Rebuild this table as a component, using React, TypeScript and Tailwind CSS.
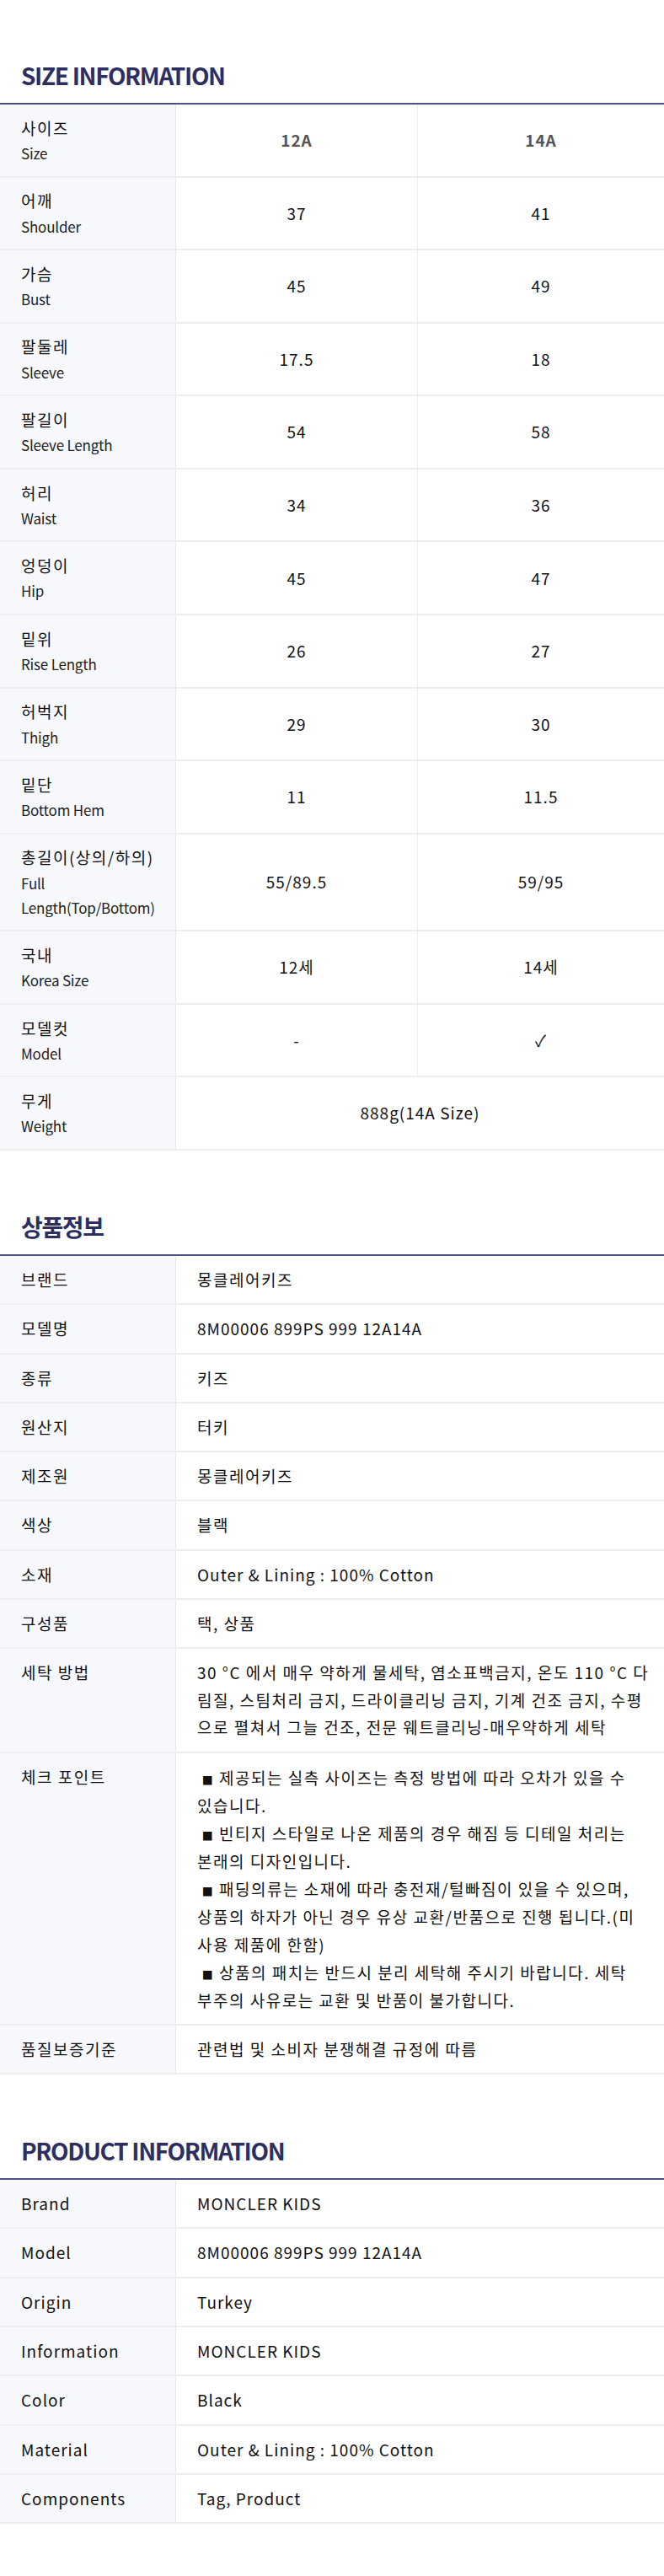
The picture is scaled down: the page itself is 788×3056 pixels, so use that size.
import React from 'react';

type SizeRow = { ko: string; en: string; a: string; b: string };

const sizeRows: SizeRow[] = [
  { ko: '어깨', en: 'Shoulder', a: '37', b: '41' },
  { ko: '가슴', en: 'Bust', a: '45', b: '49' },
  { ko: '팔둘레', en: 'Sleeve', a: '17.5', b: '18' },
  { ko: '팔길이', en: 'Sleeve Length', a: '54', b: '58' },
  { ko: '허리', en: 'Waist', a: '34', b: '36' },
  { ko: '엉덩이', en: 'Hip', a: '45', b: '47' },
  { ko: '밑위', en: 'Rise Length', a: '26', b: '27' },
  { ko: '허벅지', en: 'Thigh', a: '29', b: '30' },
  { ko: '밑단', en: 'Bottom Hem', a: '11', b: '11.5' },
  { ko: '총길이(상의/하의)', en: 'Full Length(Top/Bottom)', a: '55/89.5', b: '59/95' },
  { ko: '국내', en: 'Korea Size', a: '12세', b: '14세' },
  { ko: '모델컷', en: 'Model', a: '-', b: '✓' },
];

const hasHangul = (s: string) => /[가-힣]/.test(s);

// lines broken where the original wraps
const washLines = [
  '30 °C 에서 매우 약하게 물세탁, 염소표백금지, 온도 110 °C 다',
  '림질, 스팀처리 금지, 드라이클리닝 금지, 기계 건조 금지, 수평',
  '으로 펼쳐서 그늘 건조, 전문 웨트클리닝-매우약하게 세탁',
];

const checkLines: [boolean, string][] = [
  [true, '제공되는 실측 사이즈는 측정 방법에 따라 오차가 있을 수'],
  [false, '있습니다.'],
  [true, '빈티지 스타일로 나온 제품의 경우 해짐 등 디테일 처리는'],
  [false, '본래의 디자인입니다.'],
  [true, '패딩의류는 소재에 따라 충전재/털빠짐이 있을 수 있으며,'],
  [false, '상품의 하자가 아닌 경우 유상 교환/반품으로 진행 됩니다.(미'],
  [false, '사용 제품에 한함)'],
  [true, '상품의 패치는 반드시 분리 세탁해 주시기 바랍니다. 세탁'],
  [false, '부주의 사유로는 교환 및 반품이 불가합니다.'],
];

const productKo: [string, string][] = [
  ['브랜드', '몽클레어키즈'],
  ['모델명', '8M00006 899PS 999 12A14A'],
  ['종류', '키즈'],
  ['원산지', '터키'],
  ['제조원', '몽클레어키즈'],
  ['색상', '블랙'],
  ['소재', 'Outer & Lining : 100% Cotton'],
  ['구성품', '택, 상품'],
];

const productEn: [string, string][] = [
  ['Brand', 'MONCLER KIDS'],
  ['Model', '8M00006 899PS 999 12A14A'],
  ['Origin', 'Turkey'],
  ['Information', 'MONCLER KIDS'],
  ['Color', 'Black'],
  ['Material', 'Outer & Lining : 100% Cotton'],
  ['Components', 'Tag, Product'],
];

function SectionTitle({ children }: { children: React.ReactNode }) {
  return (
    <h2 className="px-[25px] mb-[13px] text-[28px] leading-[40px] font-bold tracking-[-1.35px] text-[#2d2f62]">
      {children}
    </h2>
  );
}

function LabelCell({ ko, en }: { ko: string; en: string }) {
  return (
    <div className="bg-[#f7f8fc] border-r border-[#e6e7ec] pl-[25px] pr-[18px] py-[11.7px]">
      <p className="text-[19px] leading-[32.3px] tracking-[1.5px] text-[#111]">{ko}</p>
      <p className="text-[17px] leading-[28.9px] tracking-[-0.2px] text-[#222]">{en}</p>
    </div>
  );
}

function SizeTable() {
  return (
    <div className="border-t-2 border-[#4e5180]">
      <div className="grid grid-cols-[209px_287px_1fr] border-b-2 border-[#eeeeee]">
        <LabelCell ko="사이즈" en="Size" />
        <div className="flex items-center justify-center border-r border-[#eeeeee] text-[19px] font-semibold tracking-[1px] text-[#555]">
          12A
        </div>
        <div className="flex items-center justify-center text-[19px] font-semibold tracking-[1px] text-[#555]">
          14A
        </div>
      </div>
      {sizeRows.map((r) => (
        <div key={r.ko} className="grid grid-cols-[209px_287px_1fr] border-b-2 border-[#eeeeee]">
          <LabelCell ko={r.ko} en={r.en} />
          <div className="flex items-center justify-center border-r border-[#eeeeee] text-[19px] tracking-[1px] text-[#111]">
            {r.a}
          </div>
          <div className="flex items-center justify-center text-[19px] tracking-[1px] text-[#111]">{r.b}</div>
        </div>
      ))}
      <div className="grid grid-cols-[209px_1fr] border-b-2 border-[#eeeeee]">
        <LabelCell ko="무게" en="Weight" />
        <div className="flex items-center justify-center text-[19px] tracking-[1px] text-[#111]">888g(14A Size)</div>
      </div>
    </div>
  );
}

function InfoRow({ label, children, value }: { label: string; children?: React.ReactNode; value?: string }) {
  const labelTrack = hasHangul(label) ? 'tracking-[1.5px]' : 'tracking-[1px]';
  const valueTrack = value && !hasHangul(value) ? 'tracking-[1px]' : 'tracking-[1.5px]';
  return (
    <div className="grid grid-cols-[209px_1fr] border-b-2 border-[#eeeeee] text-[19px] text-[#111]">
      <div className={`bg-[#f7f8fc] border-r border-[#e6e7ec] px-[25px] py-[12px] leading-[32.3px] ${labelTrack}`}>
        {label}
      </div>
      <div className={`pl-[25px] pr-[16px] py-[12px] leading-[32.3px] ${valueTrack}`}>{children ?? value}</div>
    </div>
  );
}

export default function App() {
  return (
    <div className="min-h-screen bg-white font-['Noto_Sans_CJK_KR',sans-serif] pt-[69px] pb-[67px]">
      <section>
        <SectionTitle>SIZE INFORMATION</SectionTitle>
        <SizeTable />
      </section>

      <section className="mt-[70px]">
        <SectionTitle>상품정보</SectionTitle>
        <div className="border-t-2 border-[#4e5180]">
          {productKo.map(([k, v]) => (
            <InfoRow key={k} label={k} value={v} />
          ))}
          <InfoRow label="세탁 방법">
            <div className="leading-[32.5px]">
              {washLines.map((l) => (
                <span key={l} className="block whitespace-nowrap">
                  {l}
                </span>
              ))}
            </div>
          </InfoRow>
          <InfoRow label="체크 포인트">
            <div className="leading-[33px]">
              {checkLines.map(([bullet, l]) => (
                <span key={l} className="block h-[33px] whitespace-nowrap">
                  {bullet && (
                    <>
                      {'\u00a0'}
                      <span className="text-[13px] leading-[0px]">■</span>{' '}
                    </>
                  )}
                  {l}
                </span>
              ))}
            </div>
          </InfoRow>
          <InfoRow label="품질보증기준" value="관련법 및 소비자 분쟁해결 규정에 따름" />
        </div>
      </section>

      <section className="mt-[70px]">
        <SectionTitle>PRODUCT INFORMATION</SectionTitle>
        <div className="border-t-2 border-[#4e5180]">
          {productEn.map(([k, v]) => (
            <InfoRow key={k} label={k} value={v} />
          ))}
        </div>
      </section>
    </div>
  );
}
